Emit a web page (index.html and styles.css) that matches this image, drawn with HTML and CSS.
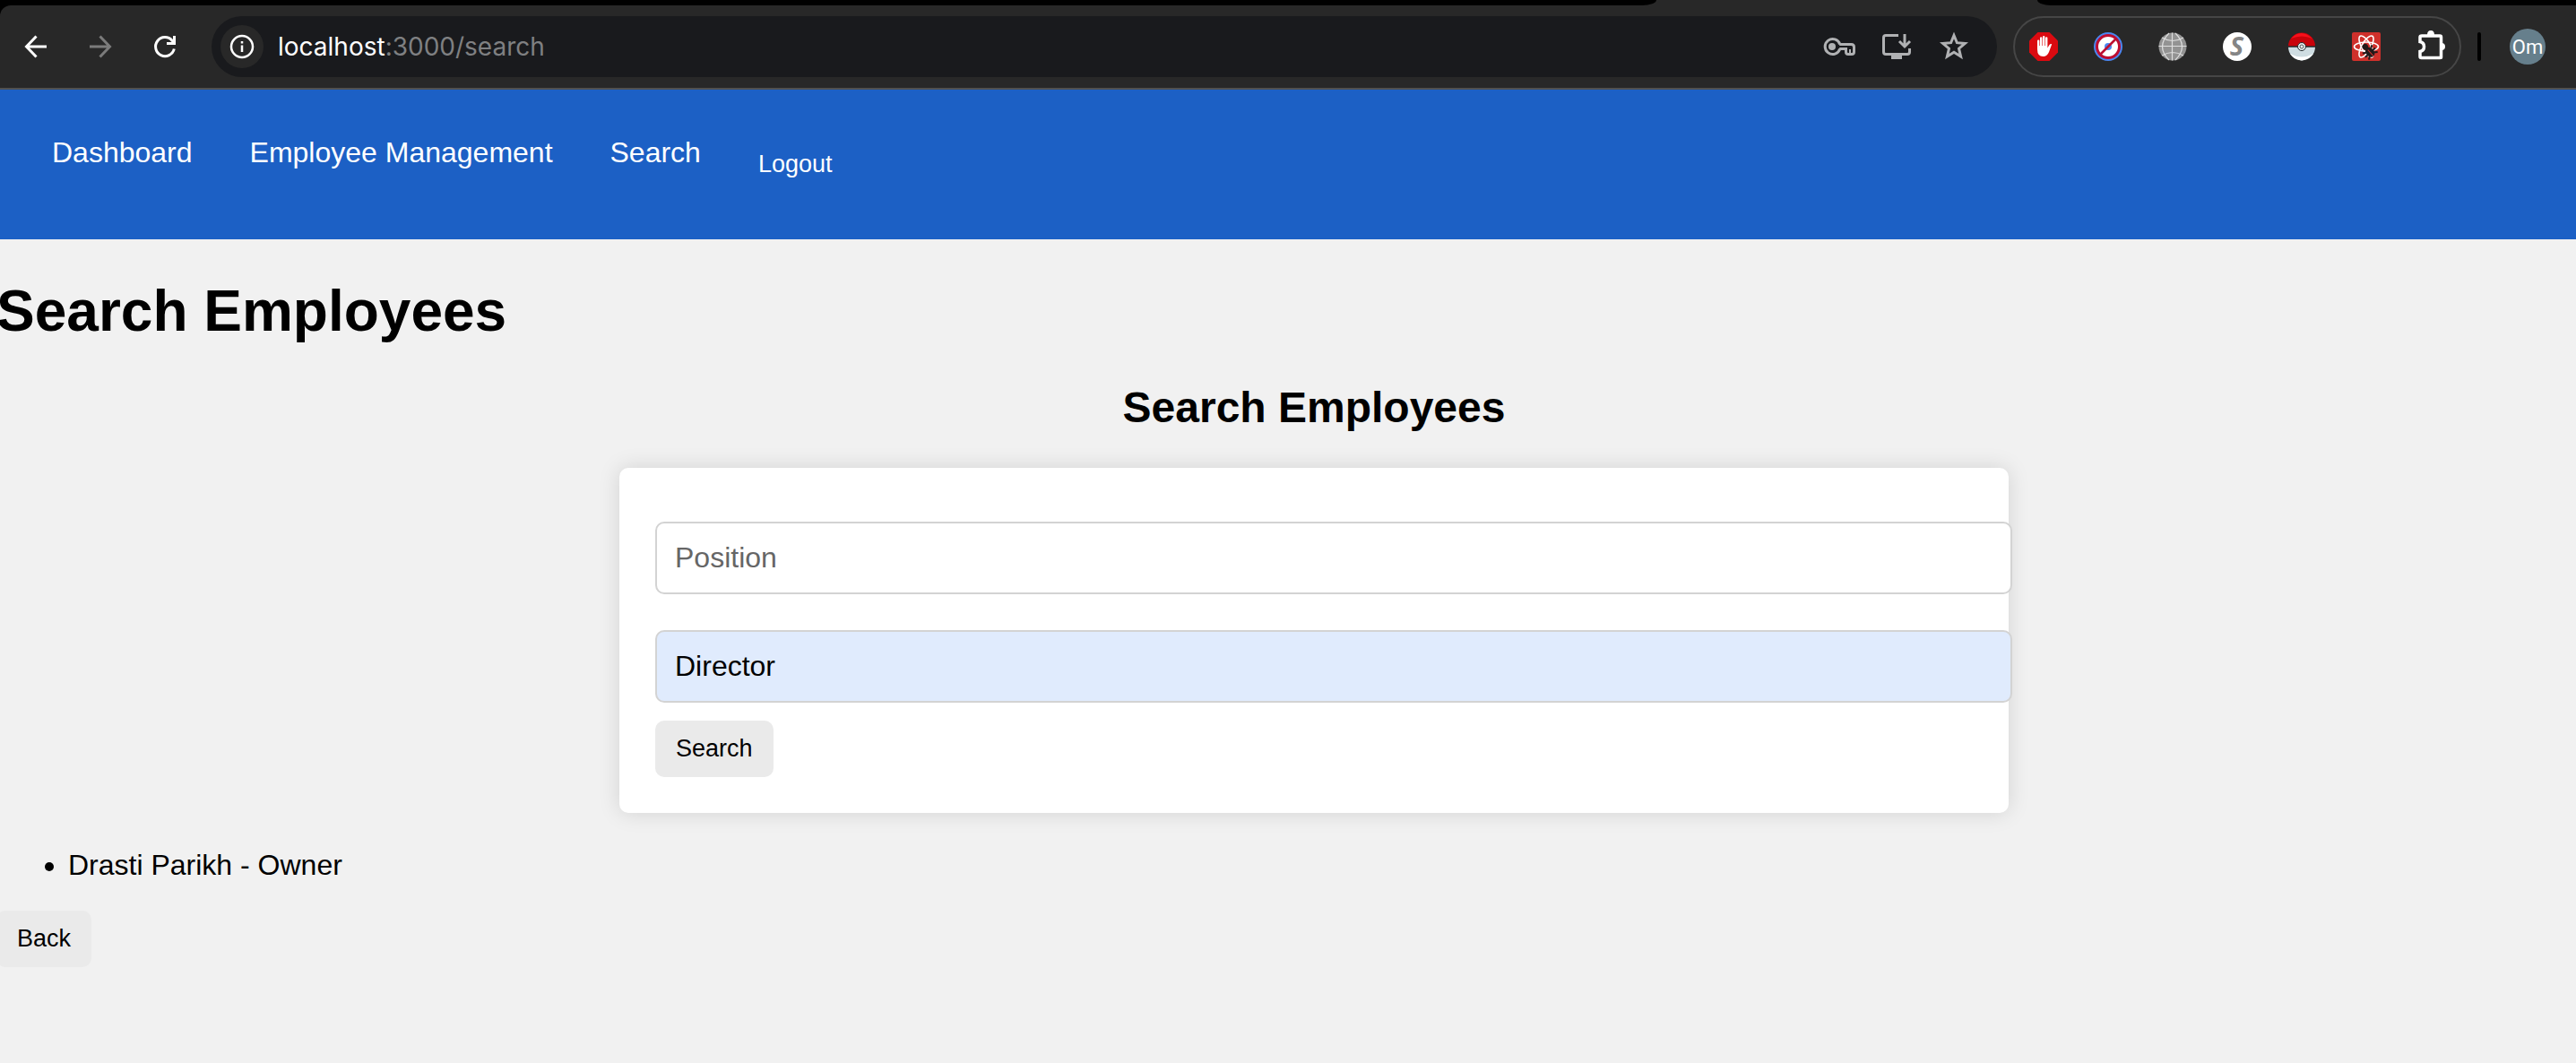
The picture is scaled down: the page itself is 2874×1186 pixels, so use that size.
FILE: index.html
```html
<!DOCTYPE html>
<html lang="en">
<head>
<meta charset="utf-8">
<meta name="viewport" content="width=device-width, initial-scale=1">
<title>Search Employees</title>
<link rel="stylesheet" href="styles.css">
</head>
<body>
<header class="browser">
  <div class="tab-strip">
    <div class="tabs-before"></div>
    <div class="tabs-after"></div>
  </div>
  <div class="toolbar">
    <div class="history">
      <button class="tool" type="button" aria-label="Back">
        <svg viewBox="0 0 40 40" width="40" height="40" fill="none" stroke="#fff" stroke-width="3"><path d="M32 20H10M20.500 8.500L9.500 20L20.500 31.500"/></svg>
      </button>
      <button class="tool" type="button" aria-label="Forward">
        <svg viewBox="0 0 40 40" width="40" height="40" fill="none" stroke="#7b7b7b" stroke-width="3"><path d="M8 20H30M19.500 8.500L30.500 20L19.500 31.500"/></svg>
      </button>
      <button class="tool" type="button" aria-label="Reload">
        <svg viewBox="0 0 40 40" width="40" height="40" fill="none" stroke="#fff" stroke-width="3"><path d="M30.300 22.500A10.500 10.500 0 1 1 28 13.200L30.500 16"/><path d="M30.500 8V16.500H22"/></svg>
      </button>
    </div>
    <div class="omnibox">
      <button class="site-info" type="button" aria-label="View site information">
        <svg viewBox="0 0 28 28" width="28" height="28" fill="none" stroke="#fff"><circle cx="14" cy="14" r="12" stroke-width="2.500"/><path d="M14 12.500V20M14 8V10.500" stroke-width="2.500"/></svg>
      </button>
      <span class="url">localhost<span class="url-path">:3000/search</span></span>
      <button class="tool" type="button" aria-label="Passwords">
        <svg viewBox="0 0 40 40" width="40" height="40" fill="none" stroke="#b0b1b3" stroke-width="3"><path d="M20.200 17.500H33.500Q36.500 17.500 36.500 20.500V26Q36.500 28.500 34 28.500H30Q27.500 28.500 27.500 26V22.500H20.200"/><path d="M20.800 17.500A8.500 8.500 0 1 0 20.800 22.500"/><circle cx="12" cy="20" r="4" fill="#b0b1b3" stroke="none"/><path d="M32 23V28" stroke-width="2"/></svg>
      </button>
      <button class="tool" type="button" aria-label="Install app">
        <svg viewBox="0 0 40 40" width="40" height="40" fill="none" stroke="#b0b1b3" stroke-width="3"><path d="M22 7.500H8Q5.500 7.500 5.500 10V26Q5.500 28.500 8 28.500H32Q34.500 28.500 34.500 26V22"/><path d="M14 28H26V34H14Z" fill="#b0b1b3" stroke="none"/><path d="M29 6V20M23 14L29 20L35 14"/></svg>
      </button>
      <button class="tool" type="button" aria-label="Bookmark this page">
        <svg viewBox="0 0 40 40" width="40" height="40" fill="none" stroke="#b0b1b3" stroke-width="3"><path d="M20 7.500L23.400 15.700L32.300 16.400L25.500 22.200L27.600 31L20 26.300L12.400 31L14.500 22.200L7.700 16.400L16.600 15.700Z"/></svg>
      </button>
    </div>
    <div class="extensions">
      <button class="extension" type="button" aria-label="Ad blocker">
        <svg viewBox="0 0 32 32" width="32" height="32"><path d="M9.500 0H22.500L32 9.500V22.500L22.500 32H9.500L0 22.500V9.500Z" fill="#db0a10"/><path d="M9 19V9.500Q9 8.500 10.200 8.500T11.400 9.500V15H12V6.500Q12 5.300 13.200 5.300T14.400 6.500V15H15V5.200Q15 4 16.200 4T17.400 5.200V15H18V6.500Q18 5.300 19.200 5.300T20.400 6.500V17.500L22.500 14Q23.700 12.500 25.200 13.200L22 22Q20 27 15.500 27Q9 27 9 19Z" fill="#fff"/></svg>
      </button>
      <button class="extension" type="button" aria-label="Request blocker">
        <svg viewBox="0 0 32 32" width="32" height="32"><circle cx="16" cy="16" r="16" fill="#4b86f0"/><circle cx="16" cy="16" r="12.500" fill="#fff" stroke="#bd0d31" stroke-width="3"/><circle cx="16" cy="16" r="4" fill="#4b86f0"/><path d="M7 25L25 7" stroke="#bd0d31" stroke-width="2.500"/></svg>
      </button>
      <button class="extension" type="button" aria-label="Web tools">
        <svg viewBox="0 0 32 32" width="32" height="32" fill="none" stroke="#dedede" stroke-width="1.200"><circle cx="16" cy="16" r="15.500" fill="#939393" stroke="none"/><path d="M15.500 0.500V31.500M0.500 15.500H31.500M4 6Q16 13 28 6M4 26Q16 19 28 26"/><path d="M12 1Q-3 16 12 31M19 1Q34 16 19 31"/></svg>
      </button>
      <button class="extension" type="button" aria-label="Stylus">
        <svg viewBox="0 0 32 32" width="32" height="32"><circle cx="16" cy="16" r="16" fill="#fff"/><text class="s-mark" x="15.500" y="26" text-anchor="middle">S</text></svg>
      </button>
      <button class="extension" type="button" aria-label="Pokeball">
        <svg viewBox="0 0 32 32" width="32" height="32"><path d="M1 15.500A15 15 0 0 1 31 15.500Z" fill="#c9020a"/><path d="M4 7Q15-5 28 7Q16 2 4 7Z" fill="#f8101b"/><path d="M1 16.500A15 15 0 0 0 31 16.500Z" fill="#cfdde2"/><path d="M3 24Q16 31 29 24Q23 31 16 31.500Q8 31 3 24Z" fill="#fff"/><path d="M1 16H31" stroke="#20282b"/><circle cx="16" cy="16" r="4.500" fill="#e8eef0" stroke="#20282b"/><circle cx="16" cy="16" r="2" fill="#fff" stroke="#4b5052"/></svg>
      </button>
      <button class="extension" type="button" aria-label="React Developer Tools">
        <svg viewBox="0 0 32 32" width="32" height="32"><rect width="32" height="32" rx="2" fill="#cf302b"/><g fill="none" stroke="#fff" stroke-width="1.600"><ellipse cx="16" cy="16" rx="13.500" ry="5"/><ellipse cx="16" cy="16" rx="13.500" ry="5" transform="rotate(60 16 16)"/><ellipse cx="16" cy="16" rx="13.500" ry="5" transform="rotate(120 16 16)"/></g><g transform="rotate(-42 19.500 21.500)" fill="#211a1a" stroke="#211a1a"><circle cx="19.500" cy="14.500" r="3.300" stroke="none"/><ellipse cx="19.500" cy="22.500" rx="4.500" ry="6" stroke="none"/><path d="M12.500 18L16 20M12 23H27M13 28L17 25M26.500 18L23 20M26 28L22 25" stroke-width="2"/><path d="M19.500 19V28" stroke="#cf302b"/></g></svg>
      </button>
      <button class="extension" type="button" aria-label="Extensions">
        <svg viewBox="0 0 32 32" width="32" height="32"><path d="M6 4H26Q27.500 4 27.500 5.500V28Q27.500 28.500 26 28.500H5.500Q4 28.500 4 27V21.500Q8.500 20.500 8.500 16T4 10.500V5.500Q4 4 6 4Z" fill="none" stroke="#fff" stroke-width="3.500"/><path d="M12 3Q12-2 16-2T20 3ZM28 12Q32 12 32 16T28 20Z" fill="#fff"/></svg>
      </button>
    </div>
    <span class="separator"></span>
    <button class="avatar" type="button">Om</button>
  </div>
</header>
<div class="page">
  <nav class="nav">
    <ul class="nav-list">
      <li><a href="#dashboard">Dashboard</a></li>
      <li><a href="#employees">Employee Management</a></li>
      <li><a href="#search">Search</a></li>
      <li><button class="logout" type="button">Logout</button></li>
    </ul>
  </nav>
  <main>
    <h1>Search Employees</h1>
    <h2>Search Employees</h2>
    <form class="search-form">
      <input class="field" type="text" placeholder="Position" aria-label="Position">
      <input class="field autofilled" type="text" value="Director" aria-label="Department">
      <button class="button" type="button">Search</button>
    </form>
    <ul class="results">
      <li>Drasti Parikh - Owner</li>
    </ul>
    <button class="button" type="button">Back</button>
  </main>
</div>
</body>
</html>
```
FILE: styles.css
```css
html {
  background: #f1f1f1;
}

body {
  margin: 0;
  overflow-x: hidden;
  font-family: "Liberation Sans", Arial, sans-serif;
  font-size: 32px;
  line-height: 37px;
  color: #000;
}

button {
  border: 0;
  font-family: inherit;
  cursor: pointer;
}

svg {
  display: block;
  overflow: visible;
}

/* Browser toolbar */
.browser {
  background: #000;
  border-bottom: 2px solid #505050;
}

.tab-strip {
  display: flex;
  justify-content: space-between;
  height: 6px;
  background: #282828;
}

.tabs-before,
.tabs-after {
  background: #000;
}

.tabs-before {
  flex: 0 0 64.3%;
  border-radius: 0 0 16px 0 / 0 0 6px 0;
}

.tabs-after {
  flex: 0 0 20.9%;
  border-radius: 0 0 0 16px / 0 0 0 6px;
}

.toolbar {
  display: flex;
  align-items: center;
  padding: 12px 34px 12px 20px;
  border-radius: 12px 0 0 0;
  background: #282828;
}

.history {
  display: flex;
  gap: 32px;
  margin-right: 32px;
}

.tool,
.extension {
  padding: 0;
  background: none;
}

.omnibox {
  display: flex;
  flex: 1;
  align-items: center;
  gap: 24px;
  height: 68px;
  box-sizing: border-box;
  padding: 0 28px 0 10px;
  border-radius: 34px;
  background: #191a1d;
}

.site-info {
  display: grid;
  place-items: center;
  width: 48px;
  height: 48px;
  margin-right: -8px;
  padding: 0;
  border-radius: 50%;
  background: #282828;
}

.url {
  flex: 1;
  font-family: Inter, sans-serif;
  font-size: 28px;
  color: #fff;
}

.url-path {
  color: #7f8082;
}

.extensions {
  display: flex;
  align-items: center;
  gap: 40px;
  height: 68px;
  box-sizing: border-box;
  margin: 0 18px;
  padding: 0 16px;
  border: 2px solid #464646;
  border-radius: 34px;
}

.s-mark {
  font: italic bold 29px "Open Sans", sans-serif;
  fill: #858585;
}

.separator {
  width: 4px;
  height: 32px;
  margin-right: 32px;
  border-radius: 2px;
  background: #000;
}

.avatar {
  width: 40px;
  height: 40px;
  padding: 0;
  border-radius: 50%;
  background: #667f8c;
  font-family: Roboto, sans-serif;
  font-size: 22px;
  color: #fff;
}

/* The page is a little wider than the window and bleeds off both sides */
.page {
  margin: 0 -62px 0 -4px;
}

.nav {
  padding: 52px 62px;
  background: #1c60c5;
}

.nav-list {
  display: flex;
  align-items: flex-start;
  gap: 64px;
  margin: 0;
  padding: 0;
  list-style: none;
}

.nav-list a {
  color: #fff;
  text-decoration: none;
}

.logout {
  display: block;
  padding: 16px 0;
  background: none;
  font-size: 27px;
  line-height: 31px;
  color: #fff;
}

h1 {
  margin: 43px 0;
  font-size: 64px;
  line-height: 74px;
}

h2 {
  margin: 40px 0;
  font-size: 48px;
  line-height: 55px;
  text-align: center;
}

.search-form {
  width: 50%;
  margin: 0 auto 40px;
  padding: 40px;
  border-radius: 10px;
  background: #fff;
  box-shadow: 0 0 24px rgba(0, 0, 0, 0.13);
}

.field {
  display: block;
  width: 100%;
  height: 37px;
  margin: 20px 0 40px;
  padding: 20px;
  border: 2px solid #d3d3d3;
  border-radius: 10px;
  background: #fff;
  font-family: inherit;
  font-size: 32px;
  color: #000;
}

.field::placeholder {
  color: #666;
}

.autofilled {
  margin-bottom: 20px;
  background: #e0ebfd;
}

.button {
  display: block;
  padding: 16px 23px;
  border-radius: 10px;
  background: #eaeaea;
  font-size: 27px;
  line-height: 31px;
  color: #000;
}

.results {
  margin: 0 0 32px;
  padding-left: 80px;
}
```
